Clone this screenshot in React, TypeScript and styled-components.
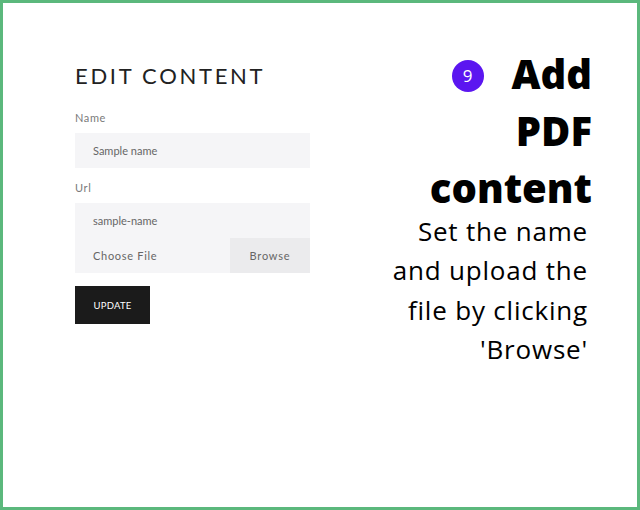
import React from "react";
import styled, { createGlobalStyle } from "styled-components";

const Global = createGlobalStyle`
  html, body { margin: 0; padding: 0; background: #ffffff; }
  * { box-sizing: border-box; }
`;

const Frame = styled.div`
  width: 640px;
  height: 510px;
  border: 3px solid #5bb87c;
  display: flex;
  justify-content: space-between;
  background: #fff;
`;

const FormColumn = styled.div`
  width: 307px;
  padding: 59px 0 0 72px;
  display: flex;
  flex-direction: column;
  font-family: Lato, "Open Sans", sans-serif;
`;

const Title = styled.h1`
  margin: 0;
  font-family: Lato, sans-serif;
  font-weight: 400;
  font-size: 22px;
  line-height: 28px;
  letter-spacing: 2.7px;
  color: #222;
`;

const Label = styled.label<{ $top: number }>`
  display: block;
  margin-top: ${(p) => p.$top}px;
  font-size: 11px;
  line-height: 14px;
  letter-spacing: 0.6px;
  color: #7a7a7a;
`;

const Field = styled.div`
  margin-top: 8px;
  background: #f5f5f7;
  display: flex;
  flex-direction: column;
`;

const FieldRow = styled.div`
  height: 35px;
  display: flex;
  align-items: center;
`;

const FieldText = styled.span<{ $spaced?: boolean }>`
  flex: 1;
  padding-left: 18px;
  font-size: 11px;
  color: #666;
  letter-spacing: ${(p) => (p.$spaced ? "0.7px" : "0")};
`;

const BrowseButton = styled.span`
  width: 80px;
  height: 100%;
  display: flex;
  align-items: center;
  justify-content: center;
  background: #ebebed;
  font-size: 11px;
  letter-spacing: 0.8px;
  color: #666;
`;

const UpdateButton = styled.button`
  margin-top: 13px;
  width: 75px;
  height: 38px;
  border: none;
  background: #1b1b1b;
  color: #fff;
  font-family: Lato, sans-serif;
  font-size: 9.5px;
  letter-spacing: 0.2px;
  padding: 0;
  text-align: center;
`;

const InfoColumn = styled.div`
  padding: 42px 45px 0 0;
  display: flex;
  flex-direction: column;
  align-items: flex-end;
  font-family: "Open Sans", sans-serif;
  text-align: right;
  color: #000;
`;

const Headline = styled.h2`
  margin: 0;
  font-weight: 800;
  font-size: 40px;
  line-height: 57px;
`;

const StepBadge = styled.span`
  display: inline-flex;
  align-items: center;
  justify-content: center;
  width: 32px;
  height: 32px;
  border-radius: 50%;
  background: #5b16f0;
  color: #fff;
  font-size: 17px;
  font-weight: 400;
  vertical-align: middle;
  margin: 0 28px 5px 0;
`;

const Description = styled.p`
  margin: -4px 4px 0 0;
  font-size: 26px;
  line-height: 39.3px;
  letter-spacing: 0.8px;
  font-weight: 400;
`;

export default function App() {
  return (
    <>
      <Global />
      <Frame>
        <FormColumn>
          <Title>EDIT CONTENT</Title>
          <Label $top={21}>Name</Label>
          <Field>
            <FieldRow>
              <FieldText>Sample name</FieldText>
            </FieldRow>
          </Field>
          <Label $top={13}>Url</Label>
          <Field>
            <FieldRow>
              <FieldText>sample-name</FieldText>
            </FieldRow>
            <FieldRow>
              <FieldText $spaced>Choose File</FieldText>
              <BrowseButton>Browse</BrowseButton>
            </FieldRow>
          </Field>
          <UpdateButton>UPDATE</UpdateButton>
        </FormColumn>
        <InfoColumn>
          <Headline>
            <StepBadge>9</StepBadge>Add
            <br />
            PDF
            <br />
            content
          </Headline>
          <Description>
            Set the name
            <br />
            and upload the
            <br />
            file by clicking
            <br />
            'Browse'
          </Description>
        </InfoColumn>
      </Frame>
    </>
  );
}
